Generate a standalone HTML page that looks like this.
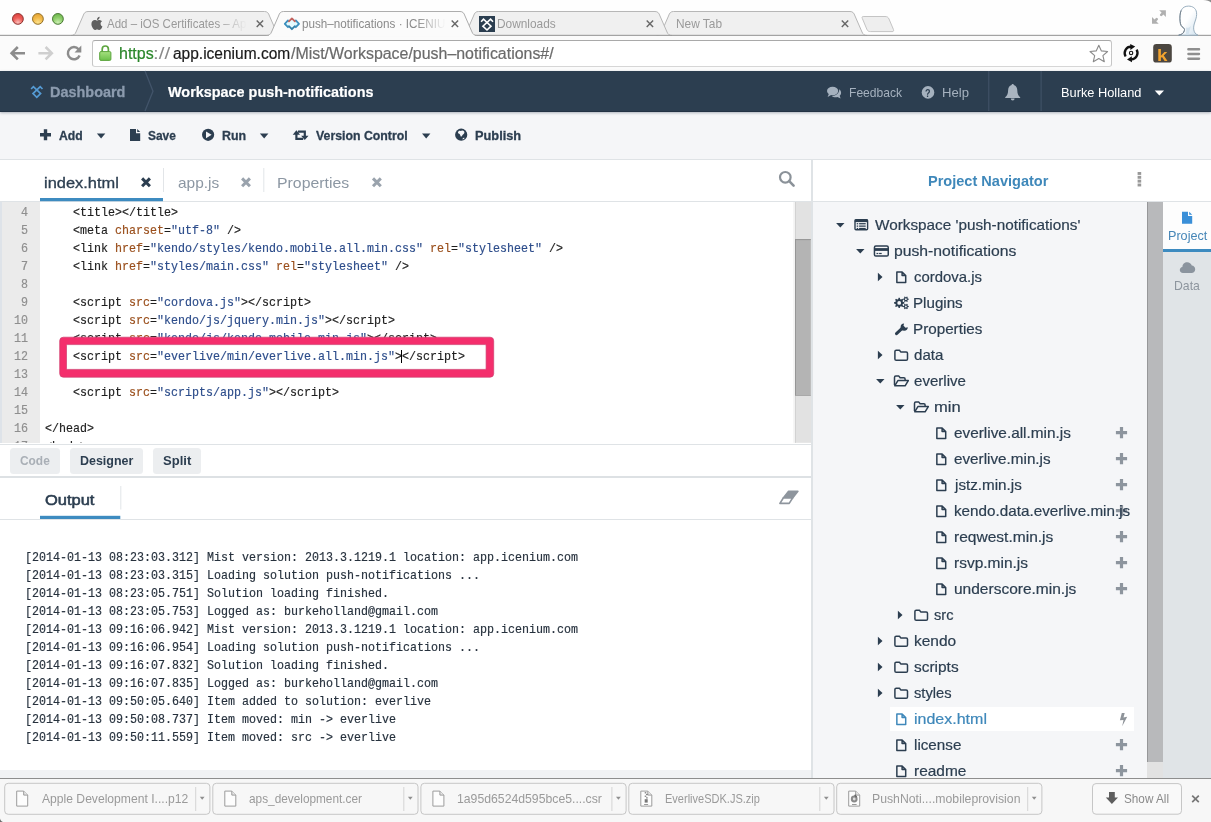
<!DOCTYPE html>
<html>
<head>
<meta charset="utf-8">
<title>push-notifications · ICENIUM</title>
<style>
*{box-sizing:border-box;margin:0;padding:0}
html,body{width:1211px;height:822px;overflow:hidden;background:#fff}
body{font-family:"Liberation Sans",sans-serif;position:relative;color:#2c3e50}
.abs{position:absolute}
svg{position:absolute;overflow:visible}
.t{position:absolute;white-space:pre;line-height:1;transform-origin:0 0}
.m{font-family:"Liberation Mono",monospace;font-size:13px;line-height:15px;transform:scaleX(0.8973);-webkit-text-stroke:0.18px}
#tabstrip{left:0;top:0;width:1211px;height:36px;background:#fefefe}
#navbar{left:0;top:36px;width:1211px;height:35px;background:#fbfbfb}
#urlbox{left:92px;top:40px;width:1019.5px;height:26.500px;background:#fff;border:1px solid #c6c6c6;border-top-color:#a9a9a9;border-bottom-color:#d6d6d6;border-radius:3px}
#hdr{left:0;top:71px;width:1211px;height:41px;background:#2c3e50;border-bottom:1px solid #233344;box-shadow:0 1px 2.5px rgba(40,55,80,.35)}
#tb{left:0;top:112px;width:1211px;height:48px;background:#f5f6f8;border-bottom:1px solid #dfe3e6}
#edtabs{left:0;top:160px;width:812px;height:42px;background:#fff;border-bottom:1px solid #dfe3e6}
#code{left:0;top:202px;width:812px;height:241.3px;overflow:hidden;background:#fff}
#viewbar{left:0;top:444px;width:812px;height:34px;background:#fff;border-top:1px solid #dfe3e6;border-bottom:2px solid #dde1e4}
#outtabs{left:0;top:478px;width:812px;height:42px;background:#fff;border-bottom:1px solid #dfe3e6}
#out{left:0;top:520px;width:812px;height:258px;background:#fff}
#rp{left:813px;top:202px;width:334px;height:576px;background:#f5f6f8}
#dl{left:0;top:777.5px;width:1211px;height:45px;background:#f7f7f7;border-top:1px solid #8e8e8e}
</style>
</head>
<body>
<div id="tabstrip" class="abs"></div>
<div id="navbar" class="abs"></div>
<svg width="1211" height="72" style="left:0;top:0">
<defs>
<radialGradient id="gr" cx="50%" cy="85%" r="80%"><stop offset="0" stop-color="#fbc1bd"/><stop offset="0.55" stop-color="#ee5f5a"/><stop offset="1" stop-color="#dd4440"/></radialGradient>
<radialGradient id="gy" cx="50%" cy="85%" r="80%"><stop offset="0" stop-color="#fce38f"/><stop offset="0.55" stop-color="#f3bb4b"/><stop offset="1" stop-color="#e5a535"/></radialGradient>
<radialGradient id="gg" cx="50%" cy="85%" r="80%"><stop offset="0" stop-color="#cdeeb4"/><stop offset="0.55" stop-color="#8fcf6c"/><stop offset="1" stop-color="#6fb74e"/></radialGradient>
<linearGradient id="glock" x1="0" y1="0" x2="0" y2="1"><stop offset="0" stop-color="#a5e07f"/><stop offset="1" stop-color="#6cc04a"/></linearGradient>
<linearGradient id="gav" x1="0" y1="0" x2="1" y2="1"><stop offset="0.45" stop-color="#ffffff"/><stop offset="1" stop-color="#cfe1ee"/></linearGradient>
</defs>
<circle cx="17.9" cy="18.9" r="5.4" fill="url(#gr)" stroke="#8e3532" stroke-width="1"/>
<circle cx="37.9" cy="18.9" r="5.4" fill="url(#gy)" stroke="#94722a" stroke-width="1"/>
<circle cx="57.9" cy="18.9" r="5.4" fill="url(#gg)" stroke="#4a7a36" stroke-width="1"/>
<path d="M656.5,35.5 C659,35.5 660.5,34.5 661.5,32 L668.5,16 C669.5,13 670.7,11.5 673.5,11.5 L850,11.5 C852.8,11.5 854,13 855,16 L862,32 C863,34.5 864.5,35.5 867,35.5" fill="#f0f0f0" stroke="#b7b7b7" stroke-width="1"/>
<path d="M461.5,35.5 C464,35.5 465.5,34.5 466.5,32 L473.5,16 C474.5,13 475.7,11.5 478.5,11.5 L655,11.5 C657.8,11.5 659,13 660,16 L667,32 C668,34.5 669.5,35.5 672,35.5" fill="#f0f0f0" stroke="#b7b7b7" stroke-width="1"/>
<path d="M71,35.5 C73.5,35.5 75,34.5 76,32 L83,16 C84,13 85.2,11.5 88,11.5 L264.5,11.5 C267.3,11.5 268.5,13 269.5,16 L276.5,32 C277.5,34.5 279,35.5 281.5,35.5" fill="#f0f0f0" stroke="#b7b7b7" stroke-width="1"/>
<rect x="0" y="34.8" width="1211" height="1.1" fill="#9a9a9a"/>
<path d="M266.5,35.5 C269,35.5 270.5,34.5 271.5,32 L278.5,16 C279.5,13 280.7,11.5 283.5,11.5 L460,11.5 C462.8,11.5 464,13 465,16 L472,32 C473,34.5 474.5,35.5 477,35.5" fill="#fbfbfb" stroke="#adadad" stroke-width="1"/>
<rect x="269" y="35" width="205.5" height="1.2" fill="#fbfbfb"/>
<path d="M863.2,16.5 L885,16.5 C887.2,16.5 888.2,17.2 889,19 L893.4,29.4 C894,31 893.4,31.6 892,31.6 L870.6,31.6 C868.6,31.6 867.6,31 866.8,29.2 L862.4,18.6 C861.8,17.2 862,16.5 863.2,16.5Z" fill="#eeeeee" stroke="#c4c4c4" stroke-width="1"/>
<path d="M256.7,20.6 L263.1,27 M263.1,20.6 L256.7,27" stroke="#686868" stroke-width="1.45" fill="none"/>
<path d="M451.7,20.6 L458.1,27 M458.1,20.6 L451.7,27" stroke="#686868" stroke-width="1.45" fill="none"/>
<path d="M646.7,20.6 L653.1,27 M653.1,20.6 L646.7,27" stroke="#686868" stroke-width="1.45" fill="none"/>
<path d="M841.8,20.6 L848.2,27 M848.2,20.6 L841.8,27" stroke="#686868" stroke-width="1.45" fill="none"/>
<g transform="translate(91.3,15.9) scale(0.0292)" fill="#606060"><path d="M318.7 268.7c-.2-36.700 16.400-64.400 50-84.800-18.800-26.900-47.200-41.700-84.700-44.600-35.500-2.800-74.300 20.700-88.500 20.700-15 0-49.400-19.700-76.400-19.700C63.300 141.200 4 184.800 4 273.500q0 39.300 14.400 81.200c12.800 36.700 59 126.700 107.200 125.200 25.200-.600 43-17.900 75.800-17.900 31.800 0 48.300 17.900 76.400 17.900 48.600-.700 90.400-82.500 102.600-119.300-65.200-30.700-61.700-90-61.700-91.900zm-56.600-164.200c27.300-32.400 24.800-61.900 24-72.500-24.100 1.400-52 16.400-67.900 34.900-17.500 19.800-27.800 44.300-25.600 71.900 26.100 2 49.900-11.400 69.500-34.300z"/></g>
<path d="M288,20.6 L288.7,21.6 L291.9,18.5 L295.1,21.6 L295.8,20.6 L298.9,23.8 L295.8,27 L295.1,26 L291.9,29.2 L288.7,26 L288,27 L284.9,23.8Z" fill="#e4fafe"/>
<g fill="none" stroke-width="1.8" stroke-linecap="round" stroke-linejoin="round"><path d="M288,20.4 L284.8,23.8 L288,27.2" stroke="#3b8fbd"/><path d="M295.8,20.4 L299,23.8 L295.8,27.2" stroke="#3b8fbd"/><path d="M288.9,26.2 L291.9,29.2 L294.9,26.2" stroke="#327fa8"/><path d="M288.9,21.4 L291.9,18.4 L294.9,21.4" stroke="#c2635f"/></g>
<rect x="479" y="16" width="16" height="16" fill="#2b3e50"/>
<path d="M481.1,21.7 L483.5,19.2 L491,26.2 L487,30 L482.9,26.2 L490.6,19.2 L493,21.7" fill="none" stroke="#fff" stroke-width="1.6" stroke-linejoin="miter"/>
<g fill="#b0b0b0"><path d="M1159.2,10.2 L1165.9,10.2 L1165.9,16.9Z"/><path d="M1152,17.1 L1152,23.8 L1158.7,23.8Z"/></g>
<g stroke="#b0b0b0" stroke-width="2.6" stroke-linecap="round"><path d="M1163.2,12.9 L1161.2,14.9"/><path d="M1154.7,21.1 L1156.7,19.1"/></g>
<path d="M1178.6,35.2 C1182,34.6 1183.8,33 1184.4,30.4 C1184.7,29.2 1184.4,28.4 1183.4,27.8 C1181.4,26.6 1180.4,24.8 1180.1,21.5 C1179.7,18 1179.8,13.5 1181.2,10.4 C1182.6,7.4 1185.2,6.1 1188.5,6.1 C1192.6,6.1 1195.8,8.2 1196.5,12.2 C1197,15.2 1196.2,18.2 1195.2,21 C1194.2,23.8 1193.4,26.4 1193.7,29.2 C1194,32 1195.4,34.2 1198,35.2Z" fill="url(#gav)" stroke="#8fa6b8" stroke-width="0.9"/>
<path d="M1178.6,35.2 C1182,34.6 1183.8,33 1184.4,30.4 C1184.7,29.2 1184.4,28.4 1183.4,27.8 C1181.4,26.6 1180.4,24.8 1180.1,21.5 C1179.7,18 1179.8,13.5 1181.2,10.4" fill="none" stroke="#6f7b85" stroke-width="0.9"/>
<path d="M1186,27.4 C1187.5,28.2 1189.5,27.8 1191,26 C1190,29 1189,32 1188.7,35 L1185.5,35 C1186.2,32.4 1186.4,29.8 1186,27.4Z" fill="#cfe0ec" opacity=".8"/>
<path d="M1203,0 L1211,0 L1211,2.6 C1209.5,1 1207,0.3 1203,0Z" fill="#8c8c8c"/>
<g fill="none" stroke-linecap="butt" stroke-linejoin="miter"><path d="M17.8,47 L11.6,53.2 L17.8,59.4 M12,53.2 L25,53.2" stroke="#8c8c8c" stroke-width="2.6"/><path d="M45.6,47 L51.8,53.2 L45.6,59.4 M51.4,53.2 L38.4,53.2" stroke="#cfcfcf" stroke-width="2.6"/><path d="M78.6,49.2 A6.1,6.1 0 1 0 79.6,55.6" stroke="#8c8c8c" stroke-width="2.5"/></g>
<path d="M81.3,45.6 L81.3,52.4 L74.5,52.4Z" fill="#8c8c8c"/>
</svg>
<div id="urlbox" class="abs"></div>
<svg width="1211" height="72" style="left:0;top:0">
<path d="M102.2,52 L102.2,49.3 A3.1,3.3 0 0 1 108.4,49.3 L108.4,52" fill="none" stroke="#5da53f" stroke-width="1.7"/>
<rect x="99.7" y="51.6" width="11.2" height="8.8" rx="1.2" fill="url(#glock)" stroke="#5da53f" stroke-width="1"/>
<path d="M1098.8,45.2 L1101.4,50.9 L1107.6,51.5 L1102.9,55.6 L1104.3,61.7 L1098.8,58.5 L1093.3,61.7 L1094.7,55.6 L1090,51.5 L1096.2,50.9Z" fill="#fff" stroke="#8a8a8a" stroke-width="1.1" stroke-linejoin="round"/>
<g fill="none" stroke="#111" stroke-width="2.3"><path d="M1125.6,56.5 A6,6.4 0 0 1 1131.5,46.8"/><path d="M1136.6,49.6 A6,6.4 0 0 1 1130.7,59.3"/></g>
<path d="M1130.2,44 L1135.2,46.6 L1130.4,50Z M1132,62.2 L1127,59.5 L1131.8,56.2Z" fill="#111"/>
<circle cx="1131.1" cy="53" r="1.7" fill="none" stroke="#111" stroke-width="1.1"/>
<rect x="1153.2" y="44" width="18.6" height="18.6" rx="3.2" fill="#4b4640"/>
<rect x="1187.2" y="48.1" width="13" height="2.4" rx="1.1" fill="#8f8f8f"/>
<rect x="1187.2" y="52.8" width="13" height="2.4" rx="1.1" fill="#8f8f8f"/>
<rect x="1187.2" y="57.5" width="13" height="2.4" rx="1.1" fill="#8f8f8f"/>
</svg>
<span class="t" style="left:1156.83px;top:46px;line-height:19px;font-size:17px;font-weight:700;color:#f2a32e;transform:scaleX(1.1059);">k</span>
<span class="t" style="left:107.40px;top:17px;line-height:14px;font-size:12.6px;color:#9a9a9a;transform:scaleX(0.9133);-webkit-mask-image:linear-gradient(90deg,#000 80%,transparent 100%);">Add – iOS Certificates – Ap</span>
<span class="t" style="left:302.45px;top:17px;line-height:14px;font-size:12.6px;color:#8a8a8a;transform:scaleX(0.9266);-webkit-mask-image:linear-gradient(90deg,#000 80%,transparent 100%);">push–notifications · ICENIU</span>
<span class="t" style="left:496.66px;top:17px;line-height:14px;font-size:12.6px;color:#9a9a9a;transform:scaleX(0.9424);">Downloads</span>
<span class="t" style="left:675.66px;top:17px;line-height:14px;font-size:12.6px;color:#9a9a9a;transform:scaleX(0.9429);">New Tab</span>
<span class="t" style="left:118.94px;top:45px;line-height:17px;font-size:16px;color:#2a862a;transform:scaleX(0.9981);-webkit-text-stroke:0.2px;">https</span>
<span class="t" style="left:153.36px;top:45px;line-height:17px;font-size:16px;color:#8a8a8a;transform:scaleX(1.2800);">://</span>
<span class="t" style="left:172.59px;top:45px;line-height:17px;font-size:16px;color:#1a1a1a;transform:scaleX(0.9689);-webkit-text-stroke:0.2px;">app.icenium.com</span>
<span class="t" style="left:291.30px;top:45px;line-height:17px;font-size:16px;color:#6a6a6a;transform:scaleX(0.9955);-webkit-text-stroke:0.2px;">/Mist/Workspace/push–notifications#/</span>
<div id="tb" class="abs"></div>
<div id="hdr" class="abs"></div>
<svg width="1211" height="100" style="left:0;top:71px">
<path d="M145,0 L153,20.3 L145,40" fill="none" stroke="#42546a" stroke-width="1.3"/>
<path d="M31.1,18 L33.4,15.7 L40.6,22.6 L36.8,26.4 L33,22.6 L40.2,15.7 L42.5,18" fill="none" stroke="#559bd4" stroke-width="1.7" stroke-linejoin="miter"/>
<g fill="#a5b1be"><ellipse cx="832.6" cy="20" rx="5.6" ry="4.2"/><path d="M829,22.5 L827.6,26 L832,23.6Z"/><path d="M839.2,18.3 C840.4,19.2 841.1,20.5 841.1,21.8 C841.1,23 840.6,24 839.7,24.8 L840.6,27.4 L837.5,26 C836.9,26.1 836.3,26.2 835.7,26.2 C834,26.2 832.6,25.7 831.6,24.9 C836,25 839.4,22.4 839.2,18.3Z"/></g>
<circle cx="928" cy="21.4" r="6.3" fill="#a5b1be"/>
<rect x="988.3" y="0" width="1" height="40" fill="#43556a"/>
<rect x="1040.6" y="0" width="1" height="40" fill="#43556a"/>
<path d="M1012.7,13 C1012,13 1011.6,13.5 1011.6,14.1 C1009.2,14.8 1008.2,17 1008.1,19.5 C1008,23 1007.2,24.6 1005.2,26.2 L1005.2,27 L1020.2,27 L1020.2,26.2 C1018.2,24.6 1017.4,23 1017.3,19.5 C1017.2,17 1016.2,14.8 1013.8,14.1 C1013.8,13.5 1013.4,13 1012.7,13Z" fill="#a9b4c0"/>
<path d="M1010.8,27.6 A1.9,1.9 0 0 0 1014.6,27.6Z" fill="#a9b4c0"/>
<path d="M1154.7,19.6 L1164,19.6 L1159.35,24.6Z" fill="#fff"/>
<path d="M45.5,58.3 L45.5,69.3 M40,63.8 L51,63.8" stroke="#2c3e50" stroke-width="3.4" fill="none"/>
<path d="M96.9,62.5 L105.3,62.5 L101.1,67.4Z" fill="#2c3e50"/>
<path d="M130,58 L136,58 L136,62.2 L140.2,62.2 L140.2,70 L130,70Z M137.2,58 L140.2,61 L137.2,61Z" fill="#2c3e50"/>
<circle cx="208.1" cy="63.8" r="6.1" fill="#2c3e50"/><path d="M206,60.4 L211.6,63.8 L206,67.2Z" fill="#f5f6f8"/>
<path d="M259.9,62.6 L268.4,62.6 L264.15,67.5Z" fill="#2c3e50"/>
<g fill="none" stroke="#2c3e50" stroke-width="2.2"><path d="M296.4,63 L296.4,67.8 L303.2,67.8"/><path d="M304.8,65.4 L304.8,60.6 L298,60.6"/></g>
<path d="M292.7,63.7 L296.4,59.3 L300.1,63.7Z M301.1,64.7 L304.8,69.1 L308.5,64.7Z" fill="#2c3e50"/>
<path d="M422,62.6 L430.4,62.6 L426.2,67.5Z" fill="#2c3e50"/>
<circle cx="461.2" cy="63.7" r="6.1" fill="#2c3e50"/>
<path d="M458.6,60.2 C459.6,59.4 460.6,60.4 461.4,59.8 C462.2,59.2 463.6,59.6 464.2,60.6 C464.8,61.8 464,63 463,63.6 C462.2,64.1 462.3,65.2 461.4,65.6 C460.7,65.9 460.4,64.8 460.2,64 C460,63 458.4,62.8 458,61.8 C457.8,61.2 458.1,60.6 458.6,60.2Z M462.6,67.4 C463.2,66.6 464.2,66.6 464.6,67 C464.2,67.8 463.4,68.3 462.6,68.4Z" fill="#f5f6f8"/>
</svg>
<span class="t" style="left:925.31px;top:87px;line-height:12px;font-size:11.5px;font-weight:700;color:#2c3e50;transform:scaleX(0.7830);">?</span>
<span class="t" style="left:49.76px;top:84px;line-height:16px;font-size:14.4px;font-weight:700;color:#8c9bae;transform:scaleX(1.0034);-webkit-text-stroke:0.3px;">Dashboard</span>
<span class="t" style="left:168.00px;top:84px;line-height:16px;font-size:14.4px;font-weight:700;color:#ffffff;transform:scaleX(1.0011);-webkit-text-stroke:0.2px;">Workspace push-notifications</span>
<span class="t" style="left:848.83px;top:85px;line-height:15px;font-size:13.2px;color:#a5b1be;transform:scaleX(0.9169);">Feedback</span>
<span class="t" style="left:941.54px;top:85px;line-height:15px;font-size:13.2px;color:#a5b1be;transform:scaleX(0.9939);">Help</span>
<span class="t" style="left:1061.37px;top:85px;line-height:15px;font-size:13.2px;color:#ffffff;transform:scaleX(0.9703);">Burke Holland</span>
<span class="t" style="left:59.10px;top:128px;line-height:15px;font-size:12.8px;font-weight:700;color:#2c3e50;transform:scaleX(0.9516);-webkit-text-stroke:0.3px;">Add</span>
<span class="t" style="left:148.21px;top:128px;line-height:15px;font-size:12.8px;font-weight:700;color:#2c3e50;transform:scaleX(0.9331);-webkit-text-stroke:0.3px;">Save</span>
<span class="t" style="left:222.01px;top:128px;line-height:15px;font-size:12.8px;font-weight:700;color:#2c3e50;transform:scaleX(0.9694);-webkit-text-stroke:0.3px;">Run</span>
<span class="t" style="left:316.34px;top:128px;line-height:15px;font-size:12.8px;font-weight:700;color:#2c3e50;transform:scaleX(0.9622);-webkit-text-stroke:0.3px;">Version Control</span>
<span class="t" style="left:474.99px;top:128px;line-height:15px;font-size:12.8px;font-weight:700;color:#2c3e50;transform:scaleX(0.9988);-webkit-text-stroke:0.3px;">Publish</span>
<div id="edtabs" class="abs"></div>
<svg width="812" height="42" style="left:0;top:160px">
<rect x="40" y="38" width="123" height="3.2" fill="#3d8bc0"/>
<rect x="163" y="8" width="1" height="24" fill="#e2e5e8"/>
<rect x="263.3" y="8" width="1" height="24" fill="#e2e5e8"/>
<path d="M142.1,18.4 L149.9,26.2 M149.9,18.4 L142.1,26.2" stroke="#2c3e50" stroke-width="3" fill="none"/>
<path d="M242.1,18.4 L249.9,26.2 M249.9,18.4 L242.1,26.2" stroke="#9aa3ad" stroke-width="3" fill="none"/>
<path d="M373,18.4 L380.8,26.2 M380.8,18.4 L373,26.2" stroke="#9aa3ad" stroke-width="3" fill="none"/>
<circle cx="785.3" cy="17.3" r="5.3" fill="none" stroke="#8b9299" stroke-width="2.2"/>
<path d="M789.2,21.2 L793.6,25.6" stroke="#8b9299" stroke-width="2.6" stroke-linecap="round"/>
</svg>
<span class="t" style="left:44.25px;top:175px;line-height:16px;font-size:14.6px;color:#2c3e50;transform:scaleX(1.1242);-webkit-text-stroke:0.3px;">index.html</span>
<span class="t" style="left:177.90px;top:175px;line-height:16px;font-size:14.6px;color:#8c97a3;transform:scaleX(1.0578);">app.js</span>
<span class="t" style="left:277.31px;top:175px;line-height:16px;font-size:14.6px;color:#8c97a3;transform:scaleX(1.0853);">Properties</span>
<div id="code" class="abs">
<div class="abs" style="left:0;top:0;width:39.5px;height:242px;background:#ebebeb"></div>
<div class="abs" style="left:0;top:0;width:2px;height:242px;background:#dee3e9"></div>
<span class="t m" style="left:20.9px;top:3px;color:#8f8f8f">4</span>
<span class="t m" style="left:44.7px;top:3px;"><span style="color:#1e1e1e">    &lt;title&gt;&lt;/title&gt;</span></span>
<span class="t m" style="left:20.9px;top:21px;color:#8f8f8f">5</span>
<span class="t m" style="left:44.7px;top:21px;"><span style="color:#1e1e1e">    &lt;meta </span><span style="color:#9a4f1c">charset</span><span style="color:#1e1e1e">=</span><span style="color:#2d4d8b">"utf-8"</span><span style="color:#1e1e1e"> /&gt;</span></span>
<span class="t m" style="left:20.9px;top:39px;color:#8f8f8f">6</span>
<span class="t m" style="left:44.7px;top:39px;"><span style="color:#1e1e1e">    &lt;link </span><span style="color:#9a4f1c">href</span><span style="color:#1e1e1e">=</span><span style="color:#2d4d8b">"kendo/styles/kendo.mobile.all.min.css"</span><span style="color:#1e1e1e"> </span><span style="color:#9a4f1c">rel</span><span style="color:#1e1e1e">=</span><span style="color:#2d4d8b">"stylesheet"</span><span style="color:#1e1e1e"> /&gt;</span></span>
<span class="t m" style="left:20.9px;top:57px;color:#8f8f8f">7</span>
<span class="t m" style="left:44.7px;top:57px;"><span style="color:#1e1e1e">    &lt;link </span><span style="color:#9a4f1c">href</span><span style="color:#1e1e1e">=</span><span style="color:#2d4d8b">"styles/main.css"</span><span style="color:#1e1e1e"> </span><span style="color:#9a4f1c">rel</span><span style="color:#1e1e1e">=</span><span style="color:#2d4d8b">"stylesheet"</span><span style="color:#1e1e1e"> /&gt;</span></span>
<span class="t m" style="left:20.9px;top:75px;color:#8f8f8f">8</span>
<span class="t m" style="left:20.9px;top:93px;color:#8f8f8f">9</span>
<span class="t m" style="left:44.7px;top:93px;"><span style="color:#1e1e1e">    &lt;script </span><span style="color:#9a4f1c">src</span><span style="color:#1e1e1e">=</span><span style="color:#2d4d8b">"cordova.js"</span><span style="color:#1e1e1e">&gt;&lt;/script&gt;</span></span>
<span class="t m" style="left:13.9px;top:111px;color:#8f8f8f">10</span>
<span class="t m" style="left:44.7px;top:111px;"><span style="color:#1e1e1e">    &lt;script </span><span style="color:#9a4f1c">src</span><span style="color:#1e1e1e">=</span><span style="color:#2d4d8b">"kendo/js/jquery.min.js"</span><span style="color:#1e1e1e">&gt;&lt;/script&gt;</span></span>
<span class="t m" style="left:13.9px;top:129px;color:#8f8f8f">11</span>
<span class="t m" style="left:44.7px;top:129px;"><span style="color:#1e1e1e">    &lt;script </span><span style="color:#9a4f1c">src</span><span style="color:#1e1e1e">=</span><span style="color:#2d4d8b">"kendo/js/kendo.mobile.min.js"</span><span style="color:#1e1e1e">&gt;&lt;/script&gt;</span></span>
<span class="t m" style="left:13.9px;top:147px;color:#8f8f8f">12</span>
<span class="t m" style="left:44.7px;top:147px;"><span style="color:#1e1e1e">    &lt;script </span><span style="color:#9a4f1c">src</span><span style="color:#1e1e1e">=</span><span style="color:#2d4d8b">"everlive/min/everlive.all.min.js"</span><span style="color:#1e1e1e">&gt;&lt;/script&gt;</span></span>
<span class="t m" style="left:13.9px;top:165px;color:#8f8f8f">13</span>
<span class="t m" style="left:13.9px;top:183px;color:#8f8f8f">14</span>
<span class="t m" style="left:44.7px;top:183px;"><span style="color:#1e1e1e">    &lt;script </span><span style="color:#9a4f1c">src</span><span style="color:#1e1e1e">=</span><span style="color:#2d4d8b">"scripts/app.js"</span><span style="color:#1e1e1e">&gt;&lt;/script&gt;</span></span>
<span class="t m" style="left:13.9px;top:201px;color:#8f8f8f">15</span>
<span class="t m" style="left:13.9px;top:219px;color:#8f8f8f">16</span>
<span class="t m" style="left:44.7px;top:219px;"><span style="color:#1e1e1e">&lt;/head&gt;</span></span>
<span class="t m" style="left:13.9px;top:237px;color:#8f8f8f">17</span>
<span class="t m" style="left:44.7px;top:237px;"><span style="color:#1e1e1e">&lt;body&gt;</span></span>
<svg width="812" height="242" style="left:0;top:0"><rect x="59.7" y="135.2" width="434" height="40" rx="3.6" fill="#f42e6c" stroke="#cf3c6e" stroke-width=".7"/><rect x="66.5" y="142.6" width="419.6" height="24.8" rx="1" fill="#fff" stroke="#cf3c6e" stroke-width=".7"/></svg>
<span class="t m" style="left:44.7px;top:147px;"><span style="color:#1e1e1e">    &lt;script </span><span style="color:#9a4f1c">src</span><span style="color:#1e1e1e">=</span><span style="color:#2d4d8b">"everlive/min/everlive.all.min.js"</span><span style="color:#1e1e1e">&gt;&lt;/script&gt;</span></span>
<div class="abs" style="left:401px;top:148.4px;width:1.2px;height:13px;background:#000"></div>
<svg width="812" height="242" style="left:0;top:0"><rect x="793.3" y="0" width="1.8" height="240.8" fill="#f3f3f3"/><rect x="795" y="0" width="17.4" height="240.8" fill="#e2e2e2"/><rect x="795" y="0" width="1" height="240.8" fill="#d2d2d2"/><rect x="795" y="37.1" width="15.8" height="156.5" fill="#b4b4b4"/><rect x="795" y="37.1" width="15.8" height="1" fill="#959595"/><rect x="795" y="37.1" width="1" height="156.5" fill="#969696"/><rect x="795" y="193" width="15.8" height=".8" fill="#a2a2a2"/></svg>
</div>
<div id="viewbar" class="abs"></div>
<div class="abs" style="left:10px;top:447.8px;width:49.7px;height:26px;background:#eceef0;border-radius:3.5px"></div>
<div class="abs" style="left:70px;top:447.8px;width:72.8px;height:26px;background:#eceef0;border-radius:3.5px"></div>
<div class="abs" style="left:153px;top:447.8px;width:47.8px;height:26px;background:#eceef0;border-radius:3.5px"></div>
<span class="t" style="left:20.13px;top:453px;line-height:15px;font-size:12.8px;font-weight:700;color:#a9afb6;transform:scaleX(0.9302);">Code</span>
<span class="t" style="left:79.81px;top:453px;line-height:15px;font-size:12.8px;font-weight:700;color:#2c3e50;transform:scaleX(0.9741);">Designer</span>
<span class="t" style="left:162.88px;top:453px;line-height:15px;font-size:12.8px;font-weight:700;color:#2c3e50;transform:scaleX(1.0190);">Split</span>
<div id="outtabs" class="abs"></div>
<svg width="812" height="44" style="left:0;top:477px">
<rect x="40" y="38.8" width="80.3" height="3.2" fill="#3d8bc0"/>
<rect x="120.3" y="9" width="1" height="23.5" fill="#e2e5e8"/>
<path d="M788.6,14.2 L797.9,14.2 L792.6,21 L783.3,21Z" fill="#8e959d" stroke="#8e959d" stroke-width="1.6" stroke-linejoin="round"/>
<path d="M783.3,21 L792.6,21 L789.2,26.4 L779.9,26.4Z" fill="#fff" stroke="#8e959d" stroke-width="1.6" stroke-linejoin="round"/>
</svg>
<span class="t" style="left:44.62px;top:492px;line-height:16px;font-size:14.6px;color:#2c3e50;transform:scaleX(1.1280);-webkit-text-stroke:0.55px #2c3e50;">Output</span>
<div id="out" class="abs"></div>
<div class="abs" style="left:0;top:769.5px;width:812px;height:9px;background:#f1f2f4"></div>
<span class="t m" style="left:24.8px;top:550px;"><span style="color:#27323e">[2014-01-13 08:23:03.312] Mist version: 2013.3.1219.1 location: app.icenium.com</span></span>
<span class="t m" style="left:24.8px;top:568px;"><span style="color:#27323e">[2014-01-13 08:23:03.315] Loading solution push-notifications ...</span></span>
<span class="t m" style="left:24.8px;top:586px;"><span style="color:#27323e">[2014-01-13 08:23:05.751] Solution loading finished.</span></span>
<span class="t m" style="left:24.8px;top:604px;"><span style="color:#27323e">[2014-01-13 08:23:05.753] Logged as: burkeholland@gmail.com</span></span>
<span class="t m" style="left:24.8px;top:622px;"><span style="color:#27323e">[2014-01-13 09:16:06.942] Mist version: 2013.3.1219.1 location: app.icenium.com</span></span>
<span class="t m" style="left:24.8px;top:640px;"><span style="color:#27323e">[2014-01-13 09:16:06.954] Loading solution push-notifications ...</span></span>
<span class="t m" style="left:24.8px;top:658px;"><span style="color:#27323e">[2014-01-13 09:16:07.832] Solution loading finished.</span></span>
<span class="t m" style="left:24.8px;top:676px;"><span style="color:#27323e">[2014-01-13 09:16:07.835] Logged as: burkeholland@gmail.com</span></span>
<span class="t m" style="left:24.8px;top:694px;"><span style="color:#27323e">[2014-01-13 09:50:05.640] Item added to solution: everlive</span></span>
<span class="t m" style="left:24.8px;top:712px;"><span style="color:#27323e">[2014-01-13 09:50:08.737] Item moved: min -&gt; everlive</span></span>
<span class="t m" style="left:24.8px;top:730px;"><span style="color:#27323e">[2014-01-13 09:50:11.559] Item moved: src -&gt; everlive</span></span>
<div id="rp" class="abs"></div>
<div class="abs" style="left:813px;top:160px;width:398px;height:41.5px;background:#fff;border-bottom:1px solid #dfe3e6"></div>
<div class="abs" style="left:811.2px;top:160px;width:1.9px;height:618px;background:#dfe3e6"></div>
<div class="abs" style="left:1163px;top:202px;width:48px;height:576px;background:#e0e4e7"></div>
<div class="abs" style="left:1163px;top:202px;width:48px;height:47px;background:#fdfdfd"></div>
<div class="abs" style="left:1163px;top:248.8px;width:48px;height:3.2px;background:#3d8bc0"></div>
<div class="abs" style="left:1147px;top:202px;width:16px;height:576px;background:#e2e2e2"></div>
<div class="abs" style="left:1147px;top:202px;width:16px;height:559.5px;background:#b8b9bb;border-left:1px solid #969799"></div>
<div class="abs" style="left:889.6px;top:707.2px;width:244.3px;height:23.6px;background:#fff"></div>
<svg width="399" height="620" viewBox="812 160 399 620" style="left:812px;top:160px">
<rect x="1137.6" y="172" width="3.6" height="2.9" fill="#999"/>
<rect x="1137.6" y="175.85" width="3.6" height="2.9" fill="#999"/>
<rect x="1137.6" y="179.7" width="3.6" height="2.9" fill="#999"/>
<rect x="1137.6" y="183.55" width="3.6" height="2.9" fill="#999"/>
<path d="M1182,211.8 L1188,211.8 L1188,216 L1192.2,216 L1192.2,223.8 L1182,223.8Z M1189.2,211.8 L1192.2,214.8 L1189.2,214.8Z" fill="#3a8fd8"/>
<path d="M1183,273 C1181,273 1179.8,271.6 1179.8,270 C1179.8,268.4 1181,267.2 1182.4,267 C1182.4,264.200 1184.600,262.200 1187.200,262.200 C1189.400,262.200 1191.200,263.600 1191.800,265.600 C1193.700,265.700 1195.200,267.300 1195.200,269.300 C1195.200,271.400 1193.600,273 1191.600,273Z" fill="#8b949e"/>
<path d="M836.1,223 L844.5,223 L840.3,227.6Z" fill="#2c3e50"/>
<rect x="855" y="219.7" width="12.6" height="10" rx="1" fill="none" stroke="#2c3e50" stroke-width="1.4"/><rect x="854.8" y="219.5" width="13" height="2.6" fill="#2c3e50"/><rect x="856.7" y="223.1" width="1.5" height="1.25" fill="#2c3e50"/><rect x="859.1" y="223.1" width="6.6" height="1.25" fill="#2c3e50"/><rect x="856.7" y="225.5" width="1.5" height="1.25" fill="#2c3e50"/><rect x="859.1" y="225.5" width="6.6" height="1.25" fill="#2c3e50"/><rect x="856.7" y="227.9" width="1.5" height="1.25" fill="#2c3e50"/><rect x="859.1" y="227.9" width="6.6" height="1.25" fill="#2c3e50"/>
<path d="M856.1,249 L864.5,249 L860.3,253.6Z" fill="#2c3e50"/>
<rect x="874.45" y="246.05" width="13.8" height="10" rx="1.4" fill="none" stroke="#2c3e50" stroke-width="1.5"/><rect x="874.3" y="248.1" width="14" height="2.8" fill="#2c3e50"/><rect x="876.5" y="252.9" width="1.8" height="1.2" fill="#2c3e50"/><rect x="879.1" y="252.9" width="2.6" height="1.2" fill="#2c3e50"/>
<path d="M877.9,272.8 L882.5,277 L877.9,281.2Z" fill="#2c3e50"/>
<path d="M896.85,271.95 L902.1,271.95 L905.7,275.6 L905.7,282.6 L896.85,282.6Z M902.1,271.95 L902.1,275.6 L905.7,275.6" fill="none" stroke="#2c3e50" stroke-width="1.5" stroke-linejoin="round"/>
<path d="M904.36,302.30 L904.36,303.50 L902.86,303.94 L902.52,304.75 L903.28,306.13 L902.43,306.98 L901.05,306.22 L900.24,306.56 L899.80,308.06 L898.60,308.06 L898.16,306.56 L897.35,306.22 L895.97,306.98 L895.12,306.13 L895.88,304.75 L895.54,303.94 L894.04,303.50 L894.04,302.30 L895.54,301.86 L895.88,301.05 L895.12,299.67 L895.97,298.82 L897.35,299.58 L898.16,299.24 L898.60,297.74 L899.80,297.74 L900.24,299.24 L901.05,299.58 L902.43,298.82 L903.28,299.67 L902.52,301.05 L902.86,301.86Z M897.30,302.90 a1.90,1.90 0 1 0 3.80,0 a1.90,1.90 0 1 0 -3.80,0Z" fill="#2c3e50" fill-rule="evenodd"/><path d="M908.75,298.68 L908.75,299.72 L907.78,299.87 L907.42,300.50 L907.78,301.41 L906.87,301.93 L906.26,301.17 L905.54,301.17 L904.93,301.93 L904.02,301.41 L904.38,300.50 L904.02,299.87 L903.05,299.72 L903.05,298.68 L904.02,298.53 L904.38,297.90 L904.02,296.99 L904.93,296.47 L905.54,297.23 L906.26,297.23 L906.87,296.47 L907.78,296.99 L907.42,297.90 L907.78,298.53Z M905.00,299.20 a0.90,0.90 0 1 0 1.80,0 a0.90,0.90 0 1 0 -1.80,0Z" fill="#2c3e50" fill-rule="evenodd"/><path d="M908.75,305.98 L908.75,307.02 L907.78,307.17 L907.42,307.80 L907.78,308.71 L906.87,309.23 L906.26,308.47 L905.54,308.47 L904.93,309.23 L904.02,308.71 L904.38,307.80 L904.02,307.17 L903.05,307.02 L903.05,305.98 L904.02,305.83 L904.38,305.20 L904.02,304.29 L904.93,303.77 L905.54,304.53 L906.26,304.53 L906.87,303.77 L907.78,304.29 L907.42,305.20 L907.78,305.83Z M905.00,306.50 a0.90,0.90 0 1 0 1.80,0 a0.90,0.90 0 1 0 -1.80,0Z" fill="#2c3e50" fill-rule="evenodd"/>
<path d="M896.5,333.6 L902.9,327.6" stroke="#2c3e50" stroke-width="3" stroke-linecap="round"/><path d="M904.1,323.5 A3.6,3.6 0 1 0 907.8,327.2 L905.5,327.8 L903.5,325.8 Z" fill="#2c3e50"/>
<path d="M877.9,350.8 L882.5,355 L877.9,359.2Z" fill="#2c3e50"/>
<path d="M894.9,351.59999999999997 L894.9,359.0 Q894.9,360.29999999999995 896.2,360.29999999999995 L906.2,360.29999999999995 Q907.5,360.29999999999995 907.5,359.0 L907.5,353.2 Q907.5,351.9 906.2,351.9 L900.7,351.9 L899.5,350.29999999999995 L896.2,350.29999999999995 Q894.9,350.29999999999995 894.9,351.59999999999997Z" fill="none" stroke="#2c3e50" stroke-width="1.5" stroke-linejoin="round"/>
<path d="M876.1,379 L884.5,379 L880.3,383.6Z" fill="#2c3e50"/>
<path d="M894.5,385.0 L894.5,377.4 Q894.5,376.09999999999997 895.8000000000001,376.09999999999997 L898.9000000000001,376.09999999999997 L900.1,377.7 L903.9000000000001,377.7 Q905.1,377.7 905.1,379.0 L905.1,380.2" fill="none" stroke="#2c3e50" stroke-width="1.5" stroke-linejoin="round"/><path d="M894.7,385.8 L897.9000000000001,380.59999999999997 L908.3000000000001,380.59999999999997 L905.1,385.8Z" fill="none" stroke="#2c3e50" stroke-width="1.5" stroke-linejoin="round"/>
<path d="M896.1,405 L904.5,405 L900.3,409.6Z" fill="#2c3e50"/>
<path d="M914.5,411.0 L914.5,403.4 Q914.5,402.09999999999997 915.8000000000001,402.09999999999997 L918.9000000000001,402.09999999999997 L920.1,403.7 L923.9000000000001,403.7 Q925.1,403.7 925.1,405.0 L925.1,406.2" fill="none" stroke="#2c3e50" stroke-width="1.5" stroke-linejoin="round"/><path d="M914.7,411.8 L917.9000000000001,406.59999999999997 L928.3000000000001,406.59999999999997 L925.1,411.8Z" fill="none" stroke="#2c3e50" stroke-width="1.5" stroke-linejoin="round"/>
<path d="M936.85,427.95 L942.1,427.95 L945.7,431.6 L945.7,438.6 L936.85,438.6Z M942.1,427.95 L942.1,431.6 L945.7,431.6" fill="none" stroke="#2c3e50" stroke-width="1.5" stroke-linejoin="round"/>
<path d="M1121.5,427 L1121.5,438.2 M1115.9,432.6 L1127.1,432.6" stroke="#8d959e" stroke-width="3.2" fill="none"/>
<path d="M936.85,453.95 L942.1,453.95 L945.7,457.6 L945.7,464.6 L936.85,464.6Z M942.1,453.95 L942.1,457.6 L945.7,457.6" fill="none" stroke="#2c3e50" stroke-width="1.5" stroke-linejoin="round"/>
<path d="M1121.5,453 L1121.5,464.2 M1115.9,458.6 L1127.1,458.6" stroke="#8d959e" stroke-width="3.2" fill="none"/>
<path d="M936.85,479.95 L942.1,479.95 L945.7,483.6 L945.7,490.6 L936.85,490.6Z M942.1,479.95 L942.1,483.6 L945.7,483.6" fill="none" stroke="#2c3e50" stroke-width="1.5" stroke-linejoin="round"/>
<path d="M1121.5,479 L1121.5,490.2 M1115.9,484.6 L1127.1,484.6" stroke="#8d959e" stroke-width="3.2" fill="none"/>
<path d="M936.85,505.95 L942.1,505.95 L945.7,509.6 L945.7,516.6 L936.85,516.6Z M942.1,505.95 L942.1,509.6 L945.7,509.6" fill="none" stroke="#2c3e50" stroke-width="1.5" stroke-linejoin="round"/>
<path d="M1121.5,505 L1121.5,516.2 M1115.9,510.6 L1127.1,510.6" stroke="#8d959e" stroke-width="3.2" fill="none"/>
<path d="M936.85,531.95 L942.1,531.95 L945.7,535.6 L945.7,542.6 L936.85,542.6Z M942.1,531.95 L942.1,535.6 L945.7,535.6" fill="none" stroke="#2c3e50" stroke-width="1.5" stroke-linejoin="round"/>
<path d="M1121.5,531 L1121.5,542.2 M1115.9,536.6 L1127.1,536.6" stroke="#8d959e" stroke-width="3.2" fill="none"/>
<path d="M936.85,557.95 L942.1,557.95 L945.7,561.6 L945.7,568.6 L936.85,568.6Z M942.1,557.95 L942.1,561.6 L945.7,561.6" fill="none" stroke="#2c3e50" stroke-width="1.5" stroke-linejoin="round"/>
<path d="M1121.5,557 L1121.5,568.2 M1115.9,562.6 L1127.1,562.6" stroke="#8d959e" stroke-width="3.2" fill="none"/>
<path d="M936.85,583.95 L942.1,583.95 L945.7,587.6 L945.7,594.6 L936.85,594.6Z M942.1,583.95 L942.1,587.6 L945.7,587.6" fill="none" stroke="#2c3e50" stroke-width="1.5" stroke-linejoin="round"/>
<path d="M1121.5,583 L1121.5,594.2 M1115.9,588.6 L1127.1,588.6" stroke="#8d959e" stroke-width="3.2" fill="none"/>
<path d="M897.9,610.8 L902.5,615 L897.9,619.2Z" fill="#2c3e50"/>
<path d="M914.9,611.6 L914.9,619.0 Q914.9,620.3 916.2,620.3 L926.2,620.3 Q927.5,620.3 927.5,619.0 L927.5,613.1999999999999 Q927.5,611.9 926.2,611.9 L920.7,611.9 L919.5,610.3 L916.2,610.3 Q914.9,610.3 914.9,611.6Z" fill="none" stroke="#2c3e50" stroke-width="1.5" stroke-linejoin="round"/>
<path d="M877.9,636.8 L882.5,641 L877.9,645.2Z" fill="#2c3e50"/>
<path d="M894.9,637.6 L894.9,645.0 Q894.9,646.3 896.2,646.3 L906.2,646.3 Q907.5,646.3 907.5,645.0 L907.5,639.1999999999999 Q907.5,637.9 906.2,637.9 L900.7,637.9 L899.5,636.3 L896.2,636.3 Q894.9,636.3 894.9,637.6Z" fill="none" stroke="#2c3e50" stroke-width="1.5" stroke-linejoin="round"/>
<path d="M877.9,662.8 L882.5,667 L877.9,671.2Z" fill="#2c3e50"/>
<path d="M894.9,663.6 L894.9,671.0 Q894.9,672.3 896.2,672.3 L906.2,672.3 Q907.5,672.3 907.5,671.0 L907.5,665.1999999999999 Q907.5,663.9 906.2,663.9 L900.7,663.9 L899.5,662.3 L896.2,662.3 Q894.9,662.3 894.9,663.6Z" fill="none" stroke="#2c3e50" stroke-width="1.5" stroke-linejoin="round"/>
<path d="M877.9,688.8 L882.5,693 L877.9,697.2Z" fill="#2c3e50"/>
<path d="M894.9,689.6 L894.9,697.0 Q894.9,698.3 896.2,698.3 L906.2,698.3 Q907.5,698.3 907.5,697.0 L907.5,691.1999999999999 Q907.5,689.9 906.2,689.9 L900.7,689.9 L899.5,688.3 L896.2,688.3 Q894.9,688.3 894.9,689.6Z" fill="none" stroke="#2c3e50" stroke-width="1.5" stroke-linejoin="round"/>
<path d="M896.85,713.95 L902.1,713.95 L905.7,717.6 L905.7,724.6 L896.85,724.6Z M902.1,713.95 L902.1,717.6 L905.7,717.6" fill="none" stroke="#3f88ba" stroke-width="1.5" stroke-linejoin="round"/>
<path d="M1121.8,712.9 L1124.7,712.9 L1123.5,717.5 L1127.2,716.8 L1122.2,726.2 L1123.5,719.9 L1119.9,720.2Z" fill="#8e9399"/>
<path d="M896.85,739.95 L902.1,739.95 L905.7,743.6 L905.7,750.6 L896.85,750.6Z M902.1,739.95 L902.1,743.6 L905.7,743.6" fill="none" stroke="#2c3e50" stroke-width="1.5" stroke-linejoin="round"/>
<path d="M1121.5,739 L1121.5,750.2 M1115.9,744.6 L1127.1,744.6" stroke="#8d959e" stroke-width="3.2" fill="none"/>
<path d="M896.85,765.95 L902.1,765.95 L905.7,769.6 L905.7,776.6 L896.85,776.6Z M902.1,765.95 L902.1,769.6 L905.7,769.6" fill="none" stroke="#2c3e50" stroke-width="1.5" stroke-linejoin="round"/>
<path d="M1121.5,765 L1121.5,776.2 M1115.9,770.6 L1127.1,770.6" stroke="#8d959e" stroke-width="3.2" fill="none"/>
</svg>
<span class="t" style="left:874.63px;top:217px;line-height:16px;font-size:14.5px;color:#2c3e50;transform:scaleX(1.0547);-webkit-text-stroke:0.2px;">Workspace 'push-notifications'</span>
<span class="t" style="left:893.75px;top:243px;line-height:16px;font-size:14.5px;color:#2c3e50;transform:scaleX(1.0837);-webkit-text-stroke:0.2px;">push-notifications</span>
<span class="t" style="left:914.12px;top:269px;line-height:16px;font-size:14.5px;color:#2c3e50;transform:scaleX(1.0273);-webkit-text-stroke:0.2px;">cordova.js</span>
<span class="t" style="left:913.46px;top:295px;line-height:16px;font-size:14.5px;color:#2c3e50;transform:scaleX(1.0443);-webkit-text-stroke:0.2px;">Plugins</span>
<span class="t" style="left:913.45px;top:321px;line-height:16px;font-size:14.5px;color:#2c3e50;transform:scaleX(1.0497);-webkit-text-stroke:0.2px;">Properties</span>
<span class="t" style="left:914.12px;top:347px;line-height:16px;font-size:14.5px;color:#2c3e50;transform:scaleX(1.0390);-webkit-text-stroke:0.2px;">data</span>
<span class="t" style="left:914.12px;top:373px;line-height:16px;font-size:14.5px;color:#2c3e50;transform:scaleX(1.0395);-webkit-text-stroke:0.2px;">everlive</span>
<span class="t" style="left:933.63px;top:399px;line-height:16px;font-size:14.5px;color:#2c3e50;transform:scaleX(1.1402);-webkit-text-stroke:0.2px;">min</span>
<span class="t" style="left:954.10px;top:425px;line-height:16px;font-size:14.5px;color:#2c3e50;transform:scaleX(1.0583);-webkit-text-stroke:0.2px;">everlive.all.min.js</span>
<span class="t" style="left:954.11px;top:451px;line-height:16px;font-size:14.5px;color:#2c3e50;transform:scaleX(1.0518);-webkit-text-stroke:0.2px;">everlive.min.js</span>
<span class="t" style="left:955.09px;top:477px;line-height:16px;font-size:14.5px;color:#2c3e50;transform:scaleX(1.0485);-webkit-text-stroke:0.2px;">jstz.min.js</span>
<span class="t" style="left:953.71px;top:503px;line-height:16px;font-size:14.5px;color:#2c3e50;transform:scaleX(1.0511);-webkit-text-stroke:0.2px;">kendo.data.everlive.min.js</span>
<span class="t" style="left:953.69px;top:529px;line-height:16px;font-size:14.5px;color:#2c3e50;transform:scaleX(1.0721);-webkit-text-stroke:0.2px;">reqwest.min.js</span>
<span class="t" style="left:953.70px;top:555px;line-height:16px;font-size:14.5px;color:#2c3e50;transform:scaleX(1.0686);-webkit-text-stroke:0.2px;">rsvp.min.js</span>
<span class="t" style="left:953.70px;top:581px;line-height:16px;font-size:14.5px;color:#2c3e50;transform:scaleX(1.0690);-webkit-text-stroke:0.2px;">underscore.min.js</span>
<span class="t" style="left:934.32px;top:607px;line-height:16px;font-size:14.5px;color:#2c3e50;transform:scaleX(1.0065);-webkit-text-stroke:0.2px;">src</span>
<span class="t" style="left:913.70px;top:633px;line-height:16px;font-size:14.5px;color:#2c3e50;transform:scaleX(1.0683);-webkit-text-stroke:0.2px;">kendo</span>
<span class="t" style="left:914.30px;top:659px;line-height:16px;font-size:14.5px;color:#2c3e50;transform:scaleX(1.0654);-webkit-text-stroke:0.2px;">scripts</span>
<span class="t" style="left:914.32px;top:685px;line-height:16px;font-size:14.5px;color:#2c3e50;transform:scaleX(1.0141);-webkit-text-stroke:0.2px;">styles</span>
<span class="t" style="left:913.67px;top:711px;line-height:16px;font-size:14.5px;color:#3f88ba;transform:scaleX(1.1037);-webkit-text-stroke:0.2px;">index.html</span>
<span class="t" style="left:913.72px;top:737px;line-height:16px;font-size:14.5px;color:#2c3e50;transform:scaleX(1.0489);-webkit-text-stroke:0.2px;">license</span>
<span class="t" style="left:913.70px;top:763px;line-height:16px;font-size:14.5px;color:#2c3e50;transform:scaleX(1.0651);-webkit-text-stroke:0.2px;">readme</span>
<span class="t" style="left:927.77px;top:173px;line-height:16px;font-size:14.6px;font-weight:700;color:#3f88ba;transform:scaleX(0.9961);">Project Navigator</span>
<span class="t" style="left:1167.58px;top:229px;line-height:14px;font-size:12.4px;color:#4686b7;transform:scaleX(1.0181);">Project</span>
<span class="t" style="left:1173.61px;top:279px;line-height:14px;font-size:12.4px;color:#8d959e;transform:scaleX(0.9868);">Data</span>
<div id="dl" class="abs"></div>
<svg width="1211" height="45" style="left:0;top:777px">
<rect x="4.7" y="6.300" width="205.200" height="31" rx="3.500" fill="#f7f7f7" stroke="#c6c6c6" stroke-width="1"/>
<rect x="195.2" y="10" width="1" height="24" fill="#d4d4d4"/>
<path d="M199.8,19.8 L204.6,19.8 L202.2,22.8Z" fill="#8f8f8f"/>
<path d="M16.7,14.1 L23.7,14.1 L27.7,18.1 L27.7,29.1 L16.7,29.1Z" fill="#fdfdfd" stroke="#9c9c9c" stroke-width="1"/><path d="M23.7,14.1 L23.7,18.1 L27.7,18.1" fill="#e6e6e6" stroke="#9c9c9c" stroke-width="1"/>
<rect x="212.8" y="6.300" width="205.200" height="31" rx="3.500" fill="#f7f7f7" stroke="#c6c6c6" stroke-width="1"/>
<rect x="403.3" y="10" width="1" height="24" fill="#d4d4d4"/>
<path d="M407.9,19.8 L412.7,19.8 L410.3,22.8Z" fill="#8f8f8f"/>
<path d="M224.8,14.1 L231.8,14.1 L235.8,18.1 L235.8,29.1 L224.8,29.1Z" fill="#fdfdfd" stroke="#9c9c9c" stroke-width="1"/><path d="M231.8,14.1 L231.8,18.1 L235.8,18.1" fill="#e6e6e6" stroke="#9c9c9c" stroke-width="1"/>
<rect x="420.9" y="6.300" width="205.200" height="31" rx="3.500" fill="#f7f7f7" stroke="#c6c6c6" stroke-width="1"/>
<rect x="611.4" y="10" width="1" height="24" fill="#d4d4d4"/>
<path d="M616,19.8 L620.8,19.8 L618.4,22.8Z" fill="#8f8f8f"/>
<path d="M432.9,14.1 L439.9,14.1 L443.9,18.1 L443.9,29.1 L432.9,29.1Z" fill="#fdfdfd" stroke="#9c9c9c" stroke-width="1"/><path d="M439.9,14.1 L439.9,18.1 L443.9,18.1" fill="#e6e6e6" stroke="#9c9c9c" stroke-width="1"/>
<rect x="628.8" y="6.300" width="205.200" height="31" rx="3.500" fill="#f7f7f7" stroke="#c6c6c6" stroke-width="1"/>
<rect x="819.3" y="10" width="1" height="24" fill="#d4d4d4"/>
<path d="M823.9,19.8 L828.7,19.8 L826.3,22.8Z" fill="#8f8f8f"/>
<path d="M640.8,14.1 L647.8,14.1 L651.8,18.1 L651.8,29.1 L640.8,29.1Z" fill="#fdfdfd" stroke="#9c9c9c" stroke-width="1"/><path d="M647.8,14.1 L647.8,18.1 L651.8,18.1" fill="#e6e6e6" stroke="#9c9c9c" stroke-width="1"/><rect x="644.7" y="15.2" width="1.6" height="1.2" fill="#777"/><rect x="646.1" y="16.9" width="1.6" height="1.2" fill="#777"/><rect x="644.7" y="18.6" width="1.6" height="1.2" fill="#777"/><rect x="646.1" y="20.3" width="1.6" height="1.2" fill="#777"/><rect x="644.7" y="22.2" width="3" height="3.4" fill="#777"/><rect x="644.1" y="27" width="4" height="1" fill="#999"/>
<rect x="836.7" y="6.300" width="205.200" height="31" rx="3.500" fill="#f7f7f7" stroke="#c6c6c6" stroke-width="1"/>
<rect x="1027.2" y="10" width="1" height="24" fill="#d4d4d4"/>
<path d="M1031.8,19.8 L1036.6,19.8 L1034.2,22.8Z" fill="#8f8f8f"/>
<path d="M848.7,14.1 L855.7,14.1 L859.7,18.1 L859.7,29.1 L848.7,29.1Z" fill="#fdfdfd" stroke="#9c9c9c" stroke-width="1"/><path d="M855.7,14.1 L855.7,18.1 L859.7,18.1" fill="#e6e6e6" stroke="#9c9c9c" stroke-width="1"/><circle cx="854.2" cy="22" r="3.4" fill="#8a8a8a"/><circle cx="854.2" cy="22" r="1.4" fill="#ddd"/><path d="M854.7,17.8 L856.6,20.2" stroke="#666" stroke-width="1.4"/><rect x="852" y="27" width="4.6" height="1" fill="#999"/>
<rect x="1092.500" y="6.600" width="89" height="30.600" rx="3.500" fill="#f9f9f9" stroke="#c6c6c6" stroke-width="1"/>
<path d="M1109,15 L1114.800,15 L1114.800,20.400 L1118,20.400 L1111.900,27 L1105.800,20.400 L1109,20.400Z" fill="#5e5e5e"/>
<path d="M1192.200,18.600 L1198.800,25.200 M1198.800,18.600 L1192.200,25.200" stroke="#777" stroke-width="1.700"/>
<path d="M0,45 L0,41.5 C0.4,43.4 1.4,44.4 3,45Z" fill="#6a6a6a"/>
</svg>
<span class="t" style="left:41.60px;top:792px;line-height:14px;font-size:12.6px;color:#9a9a9a;transform:scaleX(0.9626);">Apple Development I....p12</span>
<span class="t" style="left:248.53px;top:792px;line-height:14px;font-size:12.6px;color:#9a9a9a;transform:scaleX(0.9384);">aps_development.cer</span>
<span class="t" style="left:456.99px;top:792px;line-height:14px;font-size:12.6px;color:#9a9a9a;transform:scaleX(0.9718);">1a95d6524d595bce5....csr</span>
<span class="t" style="left:664.83px;top:792px;line-height:14px;font-size:12.6px;color:#9a9a9a;transform:scaleX(0.8746);">EverliveSDK.JS.zip</span>
<span class="t" style="left:872.43px;top:792px;line-height:14px;font-size:12.6px;color:#9a9a9a;transform:scaleX(0.9728);">PushNoti....mobileprovision</span>
<span class="t" style="left:1123.78px;top:792px;line-height:14px;font-size:12.6px;color:#8a8a8a;transform:scaleX(0.9316);">Show All</span>
</body>
</html>
